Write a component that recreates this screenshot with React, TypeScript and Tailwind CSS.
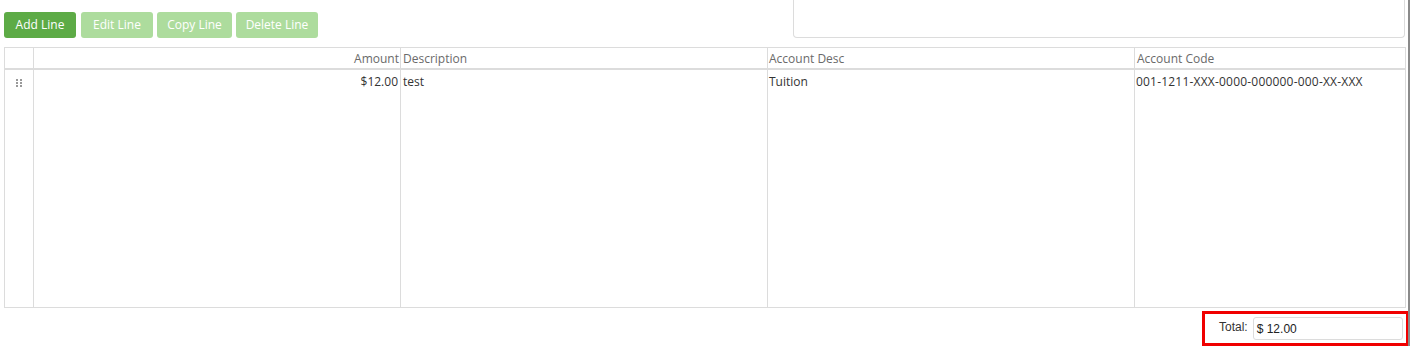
import React from 'react';

const font = { fontFamily: '"Open Sans", "Noto Sans", sans-serif' };

export default function App() {
  const btn = 'h-[26px] px-0 rounded-[3px] text-[12px] text-white leading-none whitespace-nowrap';

  return (
    <div className="relative w-[1410px] h-[346px] bg-white overflow-hidden" style={font}>
      {/* scrollbar edge */}
      <div className="absolute right-0 top-0 h-full w-[2px] bg-[#8a8a8a]" />

      <div className="flex items-start justify-between pl-[4px] pr-[5px]">
        <div className="flex gap-[4px] pt-[12px]">
          <button className={`${btn} bg-[#5dab46] w-[72px] mr-[1px]`}>Add Line</button>
          <button className={`${btn} bg-[#addc9d] w-[72px]`}>Edit Line</button>
          <button className={`${btn} bg-[#addc9d] w-[75px]`}>Copy Line</button>
          <button className={`${btn} bg-[#addc9d] w-[82px]`}>Delete Line</button>
        </div>
        <div className="w-[612px] h-[38px] border border-t-0 border-[#dcdcdc] rounded-b-[4px]" />
      </div>

      {/* grid */}
      <div className="mt-[9px] ml-[4px] w-[1402px] h-[261px] border border-[#dcdcdc] flex flex-col text-[12px]">
        <div className="flex h-[22px] border-b-2 border-[#dcdcdc] text-[#6a6a6a]">
          <div className="w-[29px] border-r border-[#dcdcdc]" />
          <div className="w-[367px] border-r border-[#dcdcdc] text-right pr-[1px] leading-[22px]">Amount</div>
          <div className="w-[367px] border-r border-[#dcdcdc] pl-[2px] leading-[22px]">Description</div>
          <div className="w-[367px] border-r border-[#dcdcdc] pl-[1px] leading-[22px]">Account Desc</div>
          <div className="flex-1 pl-[2px] leading-[22px]">Account Code</div>
        </div>
        <div className="flex flex-1 text-[#333]">
          <div className="w-[29px] border-r border-[#dcdcdc] flex justify-center pt-[9px]">
            <svg width="6" height="8" viewBox="0 0 6 8" fill="#999">
              <rect x="0" y="0" width="2" height="2" />
              <rect x="4" y="0" width="2" height="2" />
              <rect x="0" y="3" width="2" height="2" />
              <rect x="4" y="3" width="2" height="2" />
              <rect x="0" y="6" width="2" height="2" />
              <rect x="4" y="6" width="2" height="2" />
            </svg>
          </div>
          <div className="w-[367px] border-r border-[#dcdcdc] text-right pr-[2px] pt-[3px]">$12.00</div>
          <div className="w-[367px] border-r border-[#dcdcdc] pl-[2px] pt-[3px]">test</div>
          <div className="w-[367px] border-r border-[#dcdcdc] pl-[1px] pt-[3px]">Tuition</div>
          <div className="flex-1 pl-[1px] pt-[3px] tracking-[0.2px]">001-1211-XXX-0000-000000-000-XX-XXX</div>
        </div>
      </div>

      {/* total */}
      <div className="flex justify-end mt-[3px] pr-[1px]">
        <div
          className="w-[207px] h-[35px] border-[3px] border-[#f00000] flex items-center gap-[5px] pl-[14px]"
          style={{ fontFamily: '"Liberation Sans", Arial, sans-serif' }}
        >
          <span className="text-[12px] text-[#333] -mt-[4px]">Total:</span>
          <div className="w-[150px] h-[23px] border border-[#dcdcdc] rounded-[3px] text-[12px] text-[#222] leading-[22px] pl-[3px]">
            $ 12.00
          </div>
        </div>
      </div>
    </div>
  );
}
